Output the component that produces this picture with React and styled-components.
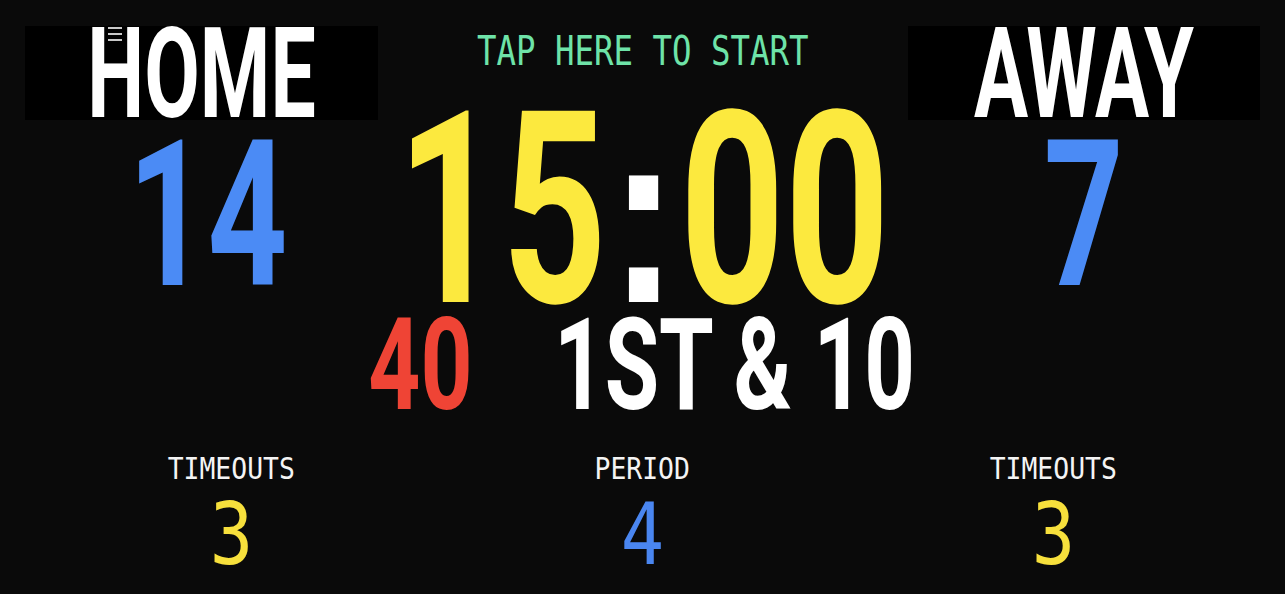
import React from 'react';
import styled, { createGlobalStyle } from 'styled-components';

const GlobalStyle = createGlobalStyle`
    html, body {
        margin: 0;
        padding: 0;
        background: #0a0a0a;
    }
`;

const BIG_FONT = `Roboto, "DejaVu Sans Condensed", "Liberation Sans", sans-serif`;
const LCD_FONT = `"DejaVu Sans Mono", "Liberation Mono", monospace`;

const Board = styled.div`
    width: 1285px;
    height: 594px;
    overflow: hidden;
    background: #0a0a0a;
    display: flex;
    flex-direction: column;
    cursor: default;
    user-select: none;
`;

const TopGrid = styled.div`
    display: grid;
    grid-template-columns: 353px 530px 352px;
    margin: 26px 0 0 25px;
`;

const Column = styled.div`
    display: flex;
    flex-direction: column;
    align-items: center;
`;

const TeamBox = styled.div`
    position: relative;
    align-self: stretch;
    box-sizing: border-box;
    height: 94px;
    padding-top: 2px;
    background: #000;
    display: flex;
    align-items: flex-start;
    justify-content: center;
`;

const MenuButton = styled.div`
    position: absolute;
    z-index: 1;
    left: 83px;
    top: -1px;
    width: 14px;
    height: 37px;
    padding-top: 2px;
    box-sizing: border-box;
    background: #000;
    display: flex;
    flex-direction: column;
    gap: 4px;
    span {
        display: block;
        height: 2px;
        background: #c8c8c8;
    }
`;

// bold face squeezed sideways into a tall scoreboard letter
const Big = styled.span`
    display: inline-block;
    font-family: ${BIG_FONT};
    font-weight: 700;
    font-size: ${p => p.$size}px;
    line-height: 0.738;
    color: ${p => p.$color || '#fff'};
    white-space: nowrap;
    transform: scaleX(${p => p.$sx || 1});
    transform-origin: center;
`;

// square dots: Arial-metric face, widened back inside the squeezed clock
const Colon = styled.span`
    display: inline-block;
    margin: 0 12px;
    font-family: "Liberation Sans", Arial, sans-serif;
    font-size: 250px;
    color: #fff;
    transform: scaleX(1.22);
`;

const ScoreSlot = styled.div`
    margin-top: 20px;
    padding-left: ${p => p.$offset || 0}px;
    box-sizing: border-box;
    display: flex;
    justify-content: center;
    width: 100%;
`;

const TapText = styled.div`
    margin-top: 10px;
    font-family: ${LCD_FONT};
    font-size: 41px;
    line-height: 0.766;
    color: #6ee3a8;
    white-space: nowrap;
    transform: scaleX(0.79);
    cursor: pointer;
`;

const Clock = styled.div`
    margin-top: 44px;
    display: flex;
    justify-content: center;
    white-space: nowrap;
`;

const DownRow = styled.div`
    margin-top: 8px;
    display: flex;
    justify-content: center;
    gap: 88px;
`;

const Slot = styled.div`
    width: ${p => p.$w}px;
    display: flex;
    justify-content: center;
`;

const BottomGrid = styled.div`
    display: grid;
    grid-template-columns: repeat(3, 1fr);
    margin: 46px 26px 0 26px;
`;

const Stat = styled.div`
    display: flex;
    flex-direction: column;
    align-items: center;
`;

const StatLabel = styled.div`
    font-family: ${LCD_FONT};
    font-size: 30px;
    line-height: 0.766;
    color: #f4f4f4;
    transform: scaleX(0.88);
    white-space: nowrap;
`;

const StatValue = styled.div`
    margin-top: 21px;
    font-family: ${LCD_FONT};
    font-size: 85px;
    line-height: 0.766;
    color: ${p => p.$color};
    transform: scaleX(0.85);
`;

const teams = {
    home: { name: 'HOME', score: 14, timeouts: 3, offset: 12 },
    away: { name: 'AWAY', score: 7, timeouts: 3, offset: 0 },
};

function Team({ team, menu }) {
    return (
        <Column>
            <TeamBox>
                {menu && (
                    <MenuButton>
                        <span /><span /><span />
                    </MenuButton>
                )}
                <Big $size={126} $sx={0.64}>{team.name}</Big>
            </TeamBox>
            <ScoreSlot $offset={team.offset}>
                <Big $size={205} $sx={0.68} $color="#4b8bf5">{team.score}</Big>
            </ScoreSlot>
        </Column>
    );
}

export default function App() {
    return (
        <Board>
            <GlobalStyle />
            <TopGrid>
                <Team team={teams.home} menu />
                <Column>
                    <TapText>TAP HERE TO START</TapText>
                    <Clock>
                        <Big $size={269} $sx={0.68} $color="#fce93e">15<Colon>:</Colon>00</Big>
                    </Clock>
                </Column>
                <Team team={teams.away} />
            </TopGrid>

            <DownRow>
                <Slot $w={96}>
                    <Big $size={128} $sx={0.71} $color="#ef4435">40</Big>
                </Slot>
                <Slot $w={356}>
                    <Big $size={128} $sx={0.69}>1ST &amp; 10</Big>
                </Slot>
            </DownRow>

            <BottomGrid>
                <Stat>
                    <StatLabel>TIMEOUTS</StatLabel>
                    <StatValue $color="#f7e03c">{teams.home.timeouts}</StatValue>
                </Stat>
                <Stat>
                    <StatLabel>PERIOD</StatLabel>
                    <StatValue $color="#4a86f0">4</StatValue>
                </Stat>
                <Stat>
                    <StatLabel>TIMEOUTS</StatLabel>
                    <StatValue $color="#f7e03c">{teams.away.timeouts}</StatValue>
                </Stat>
            </BottomGrid>
        </Board>
    );
}
